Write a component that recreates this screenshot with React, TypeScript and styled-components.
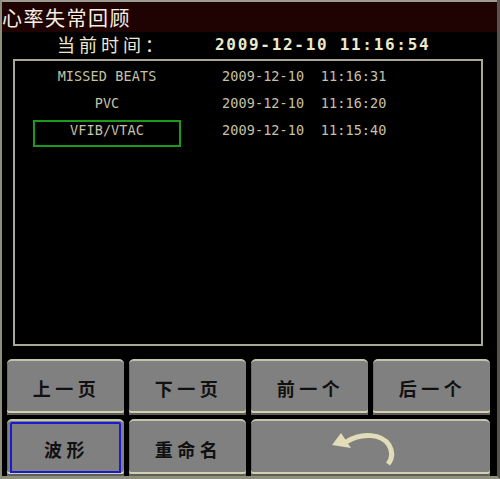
import styled, { createGlobalStyle } from 'styled-components';

const GlobalStyle = createGlobalStyle`
  html, body {
    margin: 0;
    padding: 0;
    background: #000;
  }
`;

const Screen = styled.div`
  width: 500px;
  height: 479px;
  box-sizing: border-box;
  background: #000;
  border-left: 2px solid #8e8e7e;
  border-right: 3px solid #55554d;
  border-bottom: 3px solid #8e8e7e;
  display: flex;
  flex-direction: column;
  overflow: hidden;
`;

const TitleBar = styled.div`
  height: 32px;
  box-sizing: border-box;
  border-top: 2px solid #9c9c92;
  background: #1f0202;
  display: flex;
  align-items: center;
  color: #f4f0e2;
  font-family: "Noto Sans CJK SC", sans-serif;
  font-size: 20px;
  letter-spacing: 1.5px;
`;

const ClockRow = styled.div`
  height: 24px;
  display: flex;
  align-items: center;
  padding-left: 55px;
  color: #ece8cc;
`;

const ClockLabel = styled.span`
  width: 158px;
  font-family: "Noto Sans CJK SC", sans-serif;
  font-size: 18px;
  letter-spacing: 4px;
`;

const ClockValue = styled.span`
  font-family: "DejaVu Sans Mono", monospace;
  font-weight: bold;
  font-size: 16px;
  letter-spacing: 1.7px;
  white-space: pre;
`;

const ListPanel = styled.div`
  margin: 3px 0 0 11px;
  width: 470px;
  height: 287px;
  box-sizing: border-box;
  border: 2px solid #a8a894;
  padding-top: 5px;
`;

const EventRow = styled.div`
  height: 27px;
  display: flex;
  align-items: flex-start;
  color: #c6c2a6;
  font-family: "DejaVu Sans Mono", monospace;
  font-size: 13.5px;
  letter-spacing: 0.1px;
  white-space: pre;
`;

const EventName = styled.div<{ $selected?: boolean }>`
  margin-left: 18px;
  width: 148px;
  height: 27px;
  box-sizing: border-box;
  border: 2px solid ${({ $selected }) => ($selected ? '#1c9a1c' : 'transparent')};
  line-height: 16px;
  text-align: center;
`;

const EventTime = styled.div`
  margin-left: 41px;
  padding-top: 2px;
  line-height: 16px;
`;

const ButtonGrid = styled.div`
  margin: 13px 0 0 5px;
  display: grid;
  grid-template-columns: repeat(4, 117px);
  grid-template-rows: 56px 57px;
  column-gap: 5px;
  row-gap: 4px;
`;

const KeyButton = styled.div<{ $focused?: boolean; $span?: number }>`
  grid-column: span ${({ $span }) => $span ?? 1};
  box-sizing: border-box;
  background: #808080;
  border-top: 2px solid #c4c4ac;
  border-radius: 5px 5px 2px 2px;
  box-shadow: inset 0 -2px 0 #5e5e56, inset 0 -4px 0 #d2d0b0, inset 1px 0 0 #6c6c66;
  display: flex;
  align-items: center;
  justify-content: center;
  color: #111;
  font-family: "Noto Sans CJK SC", sans-serif;
  font-weight: bold;
  font-size: 18px;
  letter-spacing: 4.5px;
  padding-left: 2px;
  outline: ${({ $focused }) => ($focused ? '2px solid #1a1ad6' : 'none')};
  outline-offset: -5px;
`;

const IconSlot = styled.span`
  display: flex;
  margin-right: 16px;
`;

const BackIcon = () => (
  <svg width="64" height="34" viewBox="0 0 64 34">
    <path
      d="M14 10 C 30 0, 50 2, 57 13 C 61 20, 60 27, 56 32"
      fill="none"
      stroke="#e2ddb8"
      strokeWidth="5"
    />
    <polygon points="0,13 9,1 19,16" fill="#e2ddb8" />
  </svg>
);

const events = [
  { name: 'MISSED BEATS', time: '2009-12-10  11:16:31' },
  { name: 'PVC', time: '2009-12-10  11:16:20' },
  { name: 'VFIB/VTAC', time: '2009-12-10  11:15:40', selected: true },
];

export default function App() {
  return (
    <>
      <GlobalStyle />
      <Screen>
        <TitleBar>心率失常回顾</TitleBar>
        <ClockRow>
          <ClockLabel>当前时间：</ClockLabel>
          <ClockValue>2009-12-10 11:16:54</ClockValue>
        </ClockRow>
        <ListPanel>
          {events.map((ev) => (
            <EventRow key={ev.name}>
              <EventName $selected={ev.selected}>{ev.name}</EventName>
              <EventTime>{ev.time}</EventTime>
            </EventRow>
          ))}
        </ListPanel>
        <ButtonGrid>
          <KeyButton>上一页</KeyButton>
          <KeyButton>下一页</KeyButton>
          <KeyButton>前一个</KeyButton>
          <KeyButton>后一个</KeyButton>
          <KeyButton $focused>波形</KeyButton>
          <KeyButton>重命名</KeyButton>
          <KeyButton $span={2}>
            <IconSlot>
              <BackIcon />
            </IconSlot>
          </KeyButton>
        </ButtonGrid>
      </Screen>
    </>
  );
}
